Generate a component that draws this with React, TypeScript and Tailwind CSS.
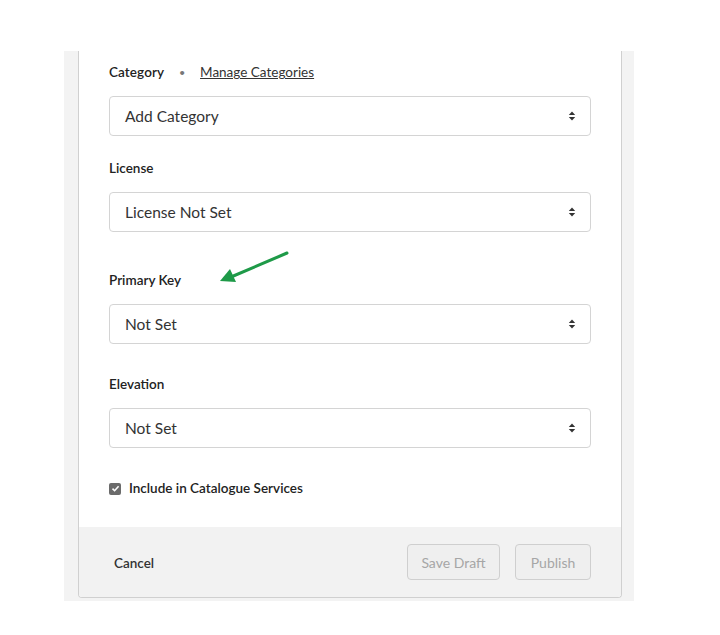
import React from "react";

function SortIcon() {
  return (
    <svg width="8" height="10" viewBox="0 0 8 10" className="shrink-0">
      <path d="M4 0.5 L7.2 4 L0.8 4 Z" fill="#333" />
      <path d="M4 9.5 L7.2 6 L0.8 6 Z" fill="#333" />
    </svg>
  );
}

function Select({ value }: { value: string }) {
  return (
    <div className="h-[40px] w-full rounded-[4px] border border-[#d4d4d4] bg-white flex items-center justify-between pl-[15px] pr-[14px]">
      <span className="text-[15.5px] text-[#333] pt-[1px]">{value}</span>
      <SortIcon />
    </div>
  );
}

function Label({ children }: { children: React.ReactNode }) {
  return <div className="h-[20px] pt-[1px] flex items-center text-[13.5px] font-semibold text-[#222]">{children}</div>;
}

export default function App() {
  return (
    <div className="relative w-[720px] h-[635px] bg-white pt-[51px] pl-[64px]" style={{ fontFamily: "Lato, 'Open Sans', sans-serif" }}>
      <div className="w-[570px] bg-[#f3f3f3] px-[14px] pb-[3px]">
        <div className="w-[544px] bg-white border-x border-b border-[#d0d0d0] rounded-b-[4px] overflow-hidden">
          <div className="px-[30px] pt-[11px] flex flex-col">
            <Label>
              <span className="tracking-[0.1px]">Category</span>
              <span className="ml-[15px] mr-[15px] text-[#777] text-[10px]">•</span>
              <span className="font-normal underline text-[#333]">Manage Categories</span>
            </Label>
            <div className="mt-[14px]"><Select value="Add Category" /></div>
            <div className="mt-[22px]"><Label>License</Label></div>
            <div className="mt-[14px]"><Select value="License Not Set" /></div>
            <div className="mt-[38px]"><Label>Primary Key</Label></div>
            <div className="mt-[14px]"><Select value="Not Set" /></div>
            <div className="mt-[30px]"><Label>Elevation</Label></div>
            <div className="mt-[14px]"><Select value="Not Set" /></div>
            <div className="mt-[30px] h-[20px] pt-[1px] flex items-center gap-[8px]">
              <span className="w-[12px] h-[12px] rounded-[2px] bg-[#6b6b6b] flex items-center justify-center">
                <svg width="9" height="9" viewBox="0 0 9 9">
                  <path d="M1.5 4.6 L3.6 6.7 L7.6 2.2" stroke="white" strokeWidth="1.6" fill="none" />
                </svg>
              </span>
              <span className="text-[13.5px] font-semibold text-[#222]">Include in Catalogue Services</span>
            </div>
          </div>
          <div className="mt-[29px] h-[70px] pt-[2px] bg-[#f2f2f2] flex items-center justify-between pl-[35px] pr-[30px]">
            <span className="text-[13.5px] font-semibold text-[#333]">Cancel</span>
            <div className="flex gap-[15px] -mt-[2px]">
              <div className="w-[93px] h-[36px] rounded-[4px] border border-[#cfcfcf] bg-[#efefef] flex items-center justify-center text-[14px] text-[#a6a6a6]">Save Draft</div>
              <div className="w-[76px] h-[36px] rounded-[4px] border border-[#cfcfcf] bg-[#efefef] flex items-center justify-center text-[14px] text-[#a6a6a6]">Publish</div>
            </div>
          </div>
        </div>
      </div>
      <svg className="absolute left-[215px] top-[248px]" width="78" height="40" viewBox="0 0 78 40">
        <path d="M72 5 L16 29" stroke="#1e9a48" strokeWidth="3" strokeLinecap="round" />
        <path d="M5 33 L15 21 L21 34 Z" fill="#1e9a48" />
      </svg>
    </div>
  );
}
